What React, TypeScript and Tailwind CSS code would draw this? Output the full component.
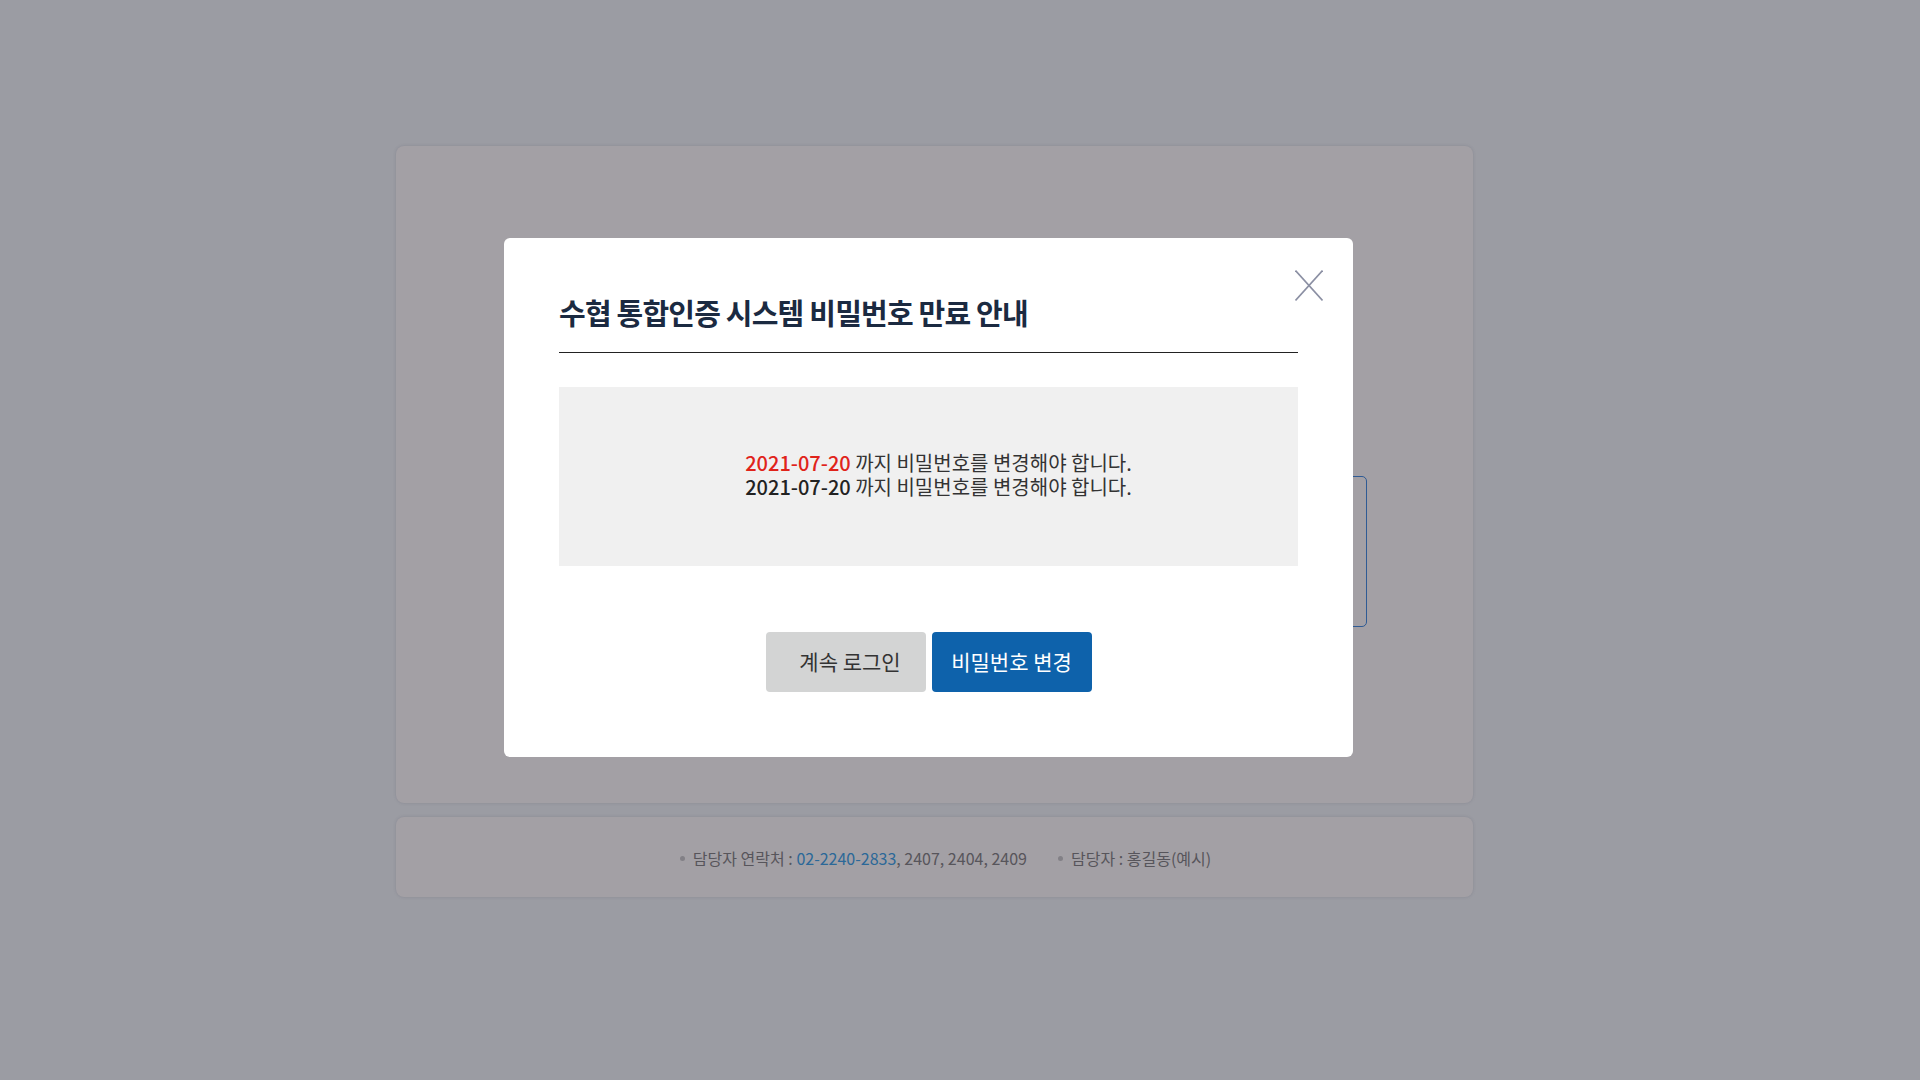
import React from "react";

const FONT = { fontFamily: '"Noto Sans CJK KR", "Noto Sans", sans-serif' };

export default function App() {
  return (
    <div className="relative min-h-screen w-full bg-[#9b9ca3]" style={FONT}>
      <div className="h-[1080px] pt-[146px] pl-[396px]">
        <div className="w-[1077px]">
          <div className="h-[657px] rounded-[8px] bg-[#a3a0a5] shadow-[0_0_3px_rgba(80,80,100,0.25)] pt-[330px]">
            <div className="flex justify-end pr-[106px]">
              <div className="h-[151px] w-[520px] rounded-[5px] border border-[#2f5b94]" />
            </div>
          </div>
          <div className="mt-[14px] flex h-[80px] items-center justify-center gap-[31px] rounded-[8px] bg-[#a3a0a5] pl-[22px] pt-[2px] text-[16px] text-[#57555b] shadow-[0_0_3px_rgba(80,80,100,0.25)]">
            <div className="flex items-center gap-[8px]">
              <span className="h-[5px] w-[5px] rounded-full bg-[#828086]" />
              <span>
                담당자 연락처 : <span className="text-[#2b6898]">02-2240-2833</span>, 2407, 2404, 2409
              </span>
            </div>
            <div className="flex items-center gap-[8px]">
              <span className="h-[5px] w-[5px] rounded-full bg-[#828086]" />
              <span>담당자 : 홍길동(예시)</span>
            </div>
          </div>
        </div>
      </div>

      <div className="absolute left-[504px] top-[238px] w-[849px] rounded-[6px] bg-white px-[55px] pt-[53px] pb-[65px]">
        <button className="absolute right-[30px] top-[32px] h-[31px] w-[28px]" aria-label="close">
          <svg width="28" height="31" viewBox="0 0 28 31" fill="none">
            <line x1="0.5" y1="0.5" x2="27.5" y2="30.5" stroke="#8b8fa3" strokeWidth="1.6" />
            <line x1="27.5" y1="0.5" x2="0.5" y2="30.5" stroke="#8b8fa3" strokeWidth="1.6" />
          </svg>
        </button>
        <h1 className="border-b border-[#222] pb-[19px] text-[29px] font-semibold leading-[42px] tracking-[-0.8px] text-[#1b2a41]">
          수협 통합인증 시스템 비밀번호 만료 안내
        </h1>
        <div className="mt-[34px] flex h-[179px] flex-col items-center justify-center bg-[#f0f0f0] pl-[20px] pb-[4px] text-[20px] leading-[24px] text-[#333]">
          <div className="flex h-[24px] items-center whitespace-pre">
            <span className="inline-block h-[24px] font-medium leading-[24px] text-[#e0231a]">2021-07-20</span>
            <span className="inline-block h-[24px] leading-[24px]"> 까지 비밀번호를 변경해야 합니다.</span>
          </div>
          <div className="flex h-[24px] items-center whitespace-pre">
            <span className="inline-block h-[24px] font-medium leading-[24px] text-[#222]">2021-07-20</span>
            <span className="inline-block h-[24px] leading-[24px]"> 까지 비밀번호를 변경해야 합니다.</span>
          </div>
        </div>
        <div className="mt-[66px] flex justify-center gap-[6px]">
          <button className="h-[60px] w-[160px] rounded-[4px] bg-[#d3d4d4] pl-[9px] text-[21px] text-[#333]">
            계속 로그인
          </button>
          <button className="h-[60px] w-[160px] rounded-[4px] bg-[#0e62ab] text-[21px] text-white">
            비밀번호 변경
          </button>
        </div>
      </div>
    </div>
  );
}
